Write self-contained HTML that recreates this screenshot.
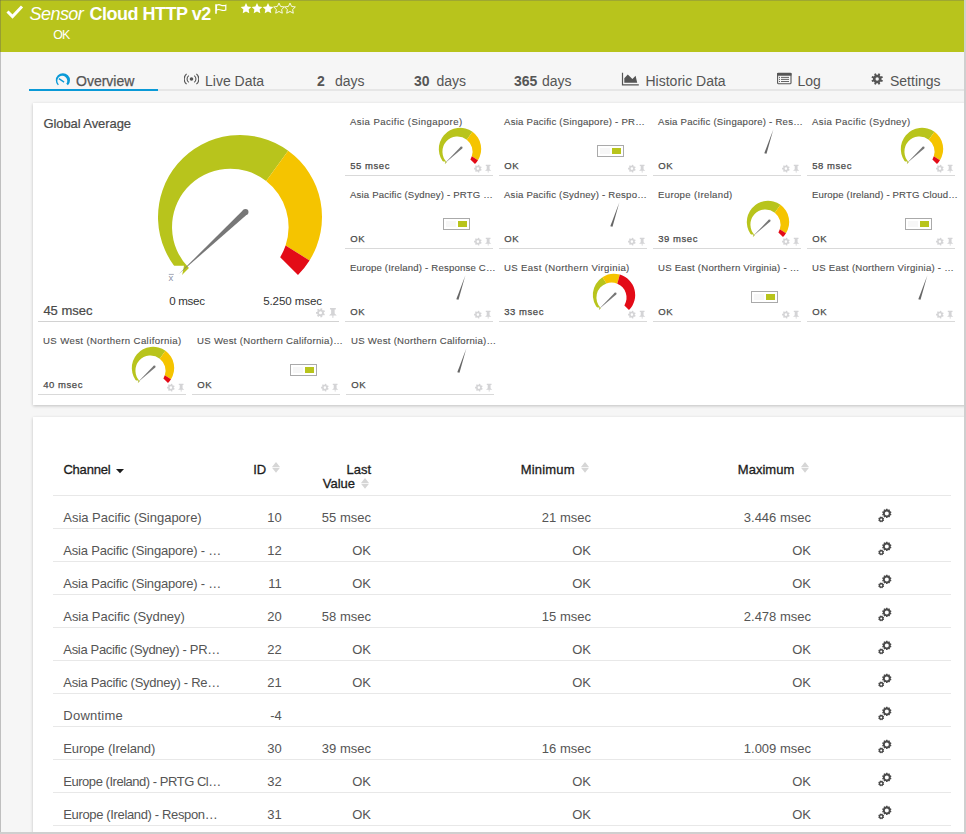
<!DOCTYPE html><html><head><meta charset="utf-8"><style>
html,body{margin:0;padding:0}
body{width:966px;height:834px;overflow:hidden;position:relative;background:#f6f6f6;font-family:"Liberation Sans", sans-serif;}
.t{position:absolute;white-space:nowrap;line-height:1;}
.ic{position:absolute;line-height:0}
.abs{position:absolute}
</style></head><body>

<div class="abs" style="left:0;top:0;width:966px;height:52px;background:#b8c41c"></div>
<svg class="abs" style="left:6px;top:4.3px" width="18" height="15" viewBox="0 0 18 15"><path d="M1.5 7.5 L6.5 12.5 L16 2.5" fill="none" stroke="#fff" stroke-width="3"/></svg>
<div class="t " style="left:29.50px;top:4.96px;font-size:18px;color:#fff;font-style:italic;letter-spacing:-0.55px">Sensor</div>
<div class="t " style="left:89.50px;top:5.36px;font-size:18px;color:#fff;font-weight:bold;letter-spacing:-0.5px">Cloud HTTP v2</div>
<svg class="abs" style="left:215px;top:4px" width="12" height="10" viewBox="0 0 12 10"><path d="M1 0.3V9.7" stroke="#fff" stroke-width="1.6"/><path d="M1.5 1.2 Q4 0.2 6 1.2 T10.8 1.2 V6 Q8.5 7 6 6 T1.5 6 Z" fill="none" stroke="#fff" stroke-width="1.2"/></svg>
<svg class="abs" style="left:0;top:0" width="320" height="20"><polygon points="246.00,3.10 247.62,6.48 251.33,6.97 248.62,9.55 249.29,13.23 246.00,11.45 242.71,13.23 243.38,9.55 240.67,6.97 244.38,6.48" fill="#fff"/><polygon points="257.00,3.10 258.62,6.48 262.33,6.97 259.62,9.55 260.29,13.23 257.00,11.45 253.71,13.23 254.38,9.55 251.67,6.97 255.38,6.48" fill="#fff"/><polygon points="268.00,3.10 269.62,6.48 273.33,6.97 270.62,9.55 271.29,13.23 268.00,11.45 264.71,13.23 265.38,9.55 262.67,6.97 266.38,6.48" fill="#fff"/><polygon points="279.00,3.10 280.62,6.48 284.33,6.97 281.62,9.55 282.29,13.23 279.00,11.45 275.71,13.23 276.38,9.55 273.67,6.97 277.38,6.48" fill="none" stroke="#fff" stroke-width="0.9"/><polygon points="290.00,3.10 291.62,6.48 295.33,6.97 292.62,9.55 293.29,13.23 290.00,11.45 286.71,13.23 287.38,9.55 284.67,6.97 288.38,6.48" fill="none" stroke="#fff" stroke-width="0.9"/></svg>
<div class="t " style="left:53.20px;top:28.60px;font-size:12.4px;color:#fff;letter-spacing:-0.75px">OK</div>
<div class="abs" style="left:29px;top:89px;width:937px;height:2px;background:#e6e6e6"></div>
<div class="abs" style="left:29px;top:89px;width:129px;height:2px;background:#0a9ad7"></div>
<svg class="abs" style="left:0;top:60px" width="80" height="30" viewBox="0 60 80 30"><path d="M57.88,85.32 A7.1,7.1 0 1 1 67.92,85.32 L66.34,83.74 A5.00,5.00 0 1 0 58.82,84.38 Z" fill="#0a9ad7"/><path d="M58.9 78.6 L64.1 82.1" stroke="#0a9ad7" stroke-width="1.3"/></svg>
<div class="t " style="left:76.00px;top:73.75px;font-size:14px;color:#555;-webkit-text-stroke:0.25px #555">Overview</div>
<svg class="abs" style="left:184px;top:73px" width="15" height="12" viewBox="0 0 15 12"><circle cx="7.5" cy="6" r="1.8" fill="#555"/><path d="M4.8 2.6 A4.2 4.2 0 0 0 4.8 9.4 M10.2 2.6 A4.2 4.2 0 0 1 10.2 9.4 M2.6 0.8 A6.8 6.8 0 0 0 2.6 11.2 M12.4 0.8 A6.8 6.8 0 0 1 12.4 11.2" fill="none" stroke="#555" stroke-width="1.1"/></svg>
<div class="t " style="left:205.00px;top:73.75px;font-size:14px;color:#555">Live Data</div>
<div class="t " style="left:317.00px;top:73.75px;font-size:14px;color:#555;font-weight:bold">2</div>
<div class="t " style="left:335.00px;top:73.75px;font-size:14px;color:#555">days</div>
<div class="t " style="left:414.00px;top:73.75px;font-size:14px;color:#555;font-weight:bold">30</div>
<div class="t " style="left:436.50px;top:73.75px;font-size:14px;color:#555">days</div>
<div class="t " style="left:514.00px;top:73.75px;font-size:14px;color:#555;font-weight:bold">365</div>
<div class="t " style="left:542.00px;top:73.75px;font-size:14px;color:#555">days</div>
<svg class="abs" style="left:615px;top:65px" width="30" height="25" viewBox="0 0 30 25"><path d="M7.5 7.8 V19.9 H23.8" fill="none" stroke="#555" stroke-width="1.2"/><path d="M9.3 17.8 V13.3 L12.8 9.6 L17.4 14 L20.6 10.8 L22.2 17.8 Z" fill="#555"/></svg>
<div class="t " style="left:645.50px;top:73.75px;font-size:14px;color:#555">Historic Data</div>
<svg class="abs" style="left:770px;top:65px" width="30" height="25" viewBox="0 0 30 25"><rect x="7.6" y="8.4" width="13.4" height="10.3" rx="0.6" fill="none" stroke="#555" stroke-width="1.1"/><rect x="7.1" y="7.9" width="14.4" height="2.8" rx="0.6" fill="#555"/><path d="M9 12.4H10 M11 12.4H19 M9 14.4H10 M11 14.4H19 M9 16.5H10 M11 16.5H19" stroke="#555" stroke-width="0.9"/></svg>
<div class="t " style="left:797.50px;top:73.75px;font-size:14px;color:#555">Log</div>
<svg class="abs" style="left:860px;top:65px" width="30" height="25" viewBox="0 0 30 25"><path fill-rule="evenodd" fill="#555" d="M21.50,14.00 L21.44,14.71 L22.95,15.33 L22.21,17.12 L20.70,16.50 L20.24,17.04 L19.70,17.50 L20.32,19.01 L18.53,19.75 L17.91,18.24 L17.20,18.30 L16.49,18.24 L15.87,19.75 L14.08,19.01 L14.70,17.50 L14.16,17.04 L13.70,16.50 L12.19,17.12 L11.45,15.33 L12.96,14.71 L12.90,14.00 L12.96,13.29 L11.45,12.67 L12.19,10.88 L13.70,11.50 L14.16,10.96 L14.70,10.50 L14.08,8.99 L15.87,8.25 L16.49,9.76 L17.20,9.70 L17.91,9.76 L18.53,8.25 L20.32,8.99 L19.70,10.50 L20.24,10.96 L20.70,11.50 L22.21,10.88 L22.95,12.67 L21.44,13.29 Z M18.90,14.00 A1.7,1.7 0 1 0 15.50,14.00 A1.7,1.7 0 1 0 18.90,14.00 Z"/></svg>
<div class="t " style="left:890.00px;top:73.75px;font-size:14px;color:#555">Settings</div>
<div class="abs" style="left:33px;top:103px;width:940px;height:302px;background:#fff;box-shadow:0 1px 3px rgba(0,0,0,0.22)"></div>
<div class="t " style="left:43.40px;top:116.60px;font-size:13px;color:#4a4a4a;letter-spacing:-0.08px;-webkit-text-stroke:0.2px #4a4a4a">Global Average</div>
<svg class="abs" style="left:0;top:0" width="340" height="330"><path d="M182.02,274.98 A82,82 0 0 1 288.20,150.66 L266.14,181.02 A58.30,58.30 0 0 0 188.93,268.07 Z" fill="#b8c41c"/><path d="M288.20,150.66 A82,82 0 0 1 309.54,260.45 L285.59,245.49 A58.30,58.30 0 0 0 266.14,181.02 Z" fill="#f5c400"/><path d="M309.54,260.45 A82,82 0 0 1 297.98,274.98 L280.18,257.18 A58.30,58.30 0 0 0 285.59,245.49 Z" fill="#e30b17"/><polygon points="165.00,265.70 184.00,265.70 182.10,275.40 165.00,287.00" fill="#fff"/><path d="M243.44,209.69 L178.57,274.29 L247.53,214.08 Z" fill="#777"/><circle cx="245.49" cy="211.89" r="3.00" fill="#777"/><text x="168.6" y="281.2" font-family="Liberation Sans" font-size="9.5" fill="#8f95a8">x</text><path d="M168.8 274.4H173.8" stroke="#8f95a8" stroke-width="0.8"/></svg>
<div class="t " style="left:169.20px;top:295.48px;font-size:11.6px;color:#333;letter-spacing:-0.3px">0 msec</div>
<div class="t " style="left:263.20px;top:295.48px;font-size:11.6px;color:#333;letter-spacing:-0.12px">5.250 msec</div>
<div class="t " style="left:43.40px;top:303.80px;font-size:13px;color:#4a4a4a;-webkit-text-stroke:0.22px #4a4a4a">45 msec</div>
<svg class="abs" style="left:300px;top:300px" width="45" height="25" viewBox="300 300 45 25"><path fill-rule="evenodd" fill="#d4d4d6" d="M323.90,312.80 L323.85,313.39 L324.96,313.92 L324.16,315.59 L323.05,315.05 L322.62,315.46 L322.13,315.79 L322.40,316.99 L320.60,317.40 L320.33,316.20 L319.74,316.12 L319.18,315.94 L318.41,316.90 L316.97,315.75 L317.74,314.79 L317.43,314.28 L317.22,313.72 L315.99,313.72 L315.99,311.88 L317.22,311.88 L317.43,311.32 L317.74,310.81 L316.97,309.85 L318.41,308.70 L319.18,309.66 L319.74,309.48 L320.33,309.40 L320.60,308.20 L322.40,308.61 L322.13,309.81 L322.62,310.14 L323.05,310.55 L324.16,310.01 L324.96,311.68 L323.85,312.21 Z M322.02,312.80 A1.518,1.518 0 1 0 318.98,312.80 A1.518,1.518 0 1 0 322.02,312.80 Z"/><path fill="#d4d4d6" d="M329.98,308.00 L335.82,308.00 L335.82,309.60 L334.65,309.60 L334.65,313.60 L336.80,315.40 L333.49,315.40 L333.29,318.00 L332.51,318.00 L332.31,315.40 L329.00,315.40 L331.14,313.60 L331.14,309.60 L329.98,309.60 Z"/></svg>
<div class="abs" style="left:38px;top:321px;width:301px;height:1px;background:#d2d2d2"></div>
<div class="t" style="left:350px;top:117.37px;font-size:9.6px;color:#4f4f4f;letter-spacing:0.426px;-webkit-text-stroke:0.12px #4f4f4f">Asia Pacific (Singapore)</div>
<div class="t " style="left:350.20px;top:160.86px;font-size:9.5px;color:#4a4a4a;letter-spacing:0.55px;-webkit-text-stroke:0.25px #4a4a4a">55 msec</div>
<svg class="abs" style="left:469px;top:160px" width="25" height="20" viewBox="469 160 25 20"><path fill-rule="evenodd" fill="#d4d4d6" d="M480.79,168.60 L480.74,169.10 L481.68,169.55 L481.00,170.96 L480.06,170.51 L479.70,170.86 L479.28,171.14 L479.51,172.15 L477.99,172.50 L477.76,171.48 L477.26,171.41 L476.78,171.26 L476.13,172.07 L474.91,171.10 L475.56,170.29 L475.30,169.85 L475.12,169.38 L474.08,169.38 L474.08,167.82 L475.12,167.82 L475.30,167.35 L475.56,166.91 L474.91,166.10 L476.13,165.13 L476.78,165.94 L477.26,165.79 L477.76,165.72 L477.99,164.70 L479.51,165.05 L479.28,166.06 L479.70,166.34 L480.06,166.69 L481.00,166.24 L481.68,167.65 L480.74,168.10 Z M479.19,168.60 A1.287,1.287 0 1 0 476.61,168.60 A1.287,1.287 0 1 0 479.19,168.60 Z"/><path fill="#d4d4d6" d="M485.79,164.80 L490.51,164.80 L490.51,166.08 L489.57,166.08 L489.57,169.28 L491.30,170.72 L488.62,170.72 L488.46,172.80 L487.83,172.80 L487.68,170.72 L485.00,170.72 L486.73,169.28 L486.73,166.08 L485.79,166.08 Z"/></svg>
<div class="abs" style="left:345px;top:175px;width:148px;height:1px;background:#d9d9d9"></div>
<div class="t" style="left:504px;top:117.37px;font-size:9.6px;color:#4f4f4f;letter-spacing:0.240px;-webkit-text-stroke:0.12px #4f4f4f">Asia Pacific (Singapore) - PR…</div>
<div class="t " style="left:504.20px;top:160.86px;font-size:9.5px;color:#4a4a4a;letter-spacing:0.55px;-webkit-text-stroke:0.25px #4a4a4a">OK</div>
<svg class="abs" style="left:623px;top:160px" width="25" height="20" viewBox="623 160 25 20"><path fill-rule="evenodd" fill="#d4d4d6" d="M634.79,168.60 L634.74,169.10 L635.68,169.55 L635.00,170.96 L634.06,170.51 L633.70,170.86 L633.28,171.14 L633.51,172.15 L631.99,172.50 L631.76,171.48 L631.26,171.41 L630.78,171.26 L630.13,172.07 L628.91,171.10 L629.56,170.29 L629.30,169.85 L629.12,169.38 L628.08,169.38 L628.08,167.82 L629.12,167.82 L629.30,167.35 L629.56,166.91 L628.91,166.10 L630.13,165.13 L630.78,165.94 L631.26,165.79 L631.76,165.72 L631.99,164.70 L633.51,165.05 L633.28,166.06 L633.70,166.34 L634.06,166.69 L635.00,166.24 L635.68,167.65 L634.74,168.10 Z M633.19,168.60 A1.287,1.287 0 1 0 630.61,168.60 A1.287,1.287 0 1 0 633.19,168.60 Z"/><path fill="#d4d4d6" d="M639.79,164.80 L644.51,164.80 L644.51,166.08 L643.57,166.08 L643.57,169.28 L645.30,170.72 L642.62,170.72 L642.47,172.80 L641.84,172.80 L641.68,170.72 L639.00,170.72 L640.73,169.28 L640.73,166.08 L639.79,166.08 Z"/></svg>
<div class="abs" style="left:499px;top:175px;width:148px;height:1px;background:#d9d9d9"></div>
<div class="t" style="left:658px;top:117.37px;font-size:9.6px;color:#4f4f4f;letter-spacing:0.241px;-webkit-text-stroke:0.12px #4f4f4f">Asia Pacific (Singapore) - Res…</div>
<div class="t " style="left:658.20px;top:160.86px;font-size:9.5px;color:#4a4a4a;letter-spacing:0.55px;-webkit-text-stroke:0.25px #4a4a4a">OK</div>
<svg class="abs" style="left:777px;top:160px" width="25" height="20" viewBox="777 160 25 20"><path fill-rule="evenodd" fill="#d4d4d6" d="M788.79,168.60 L788.74,169.10 L789.68,169.55 L789.00,170.96 L788.06,170.51 L787.70,170.86 L787.28,171.14 L787.51,172.15 L785.99,172.50 L785.76,171.48 L785.26,171.41 L784.78,171.26 L784.13,172.07 L782.91,171.10 L783.56,170.29 L783.30,169.85 L783.12,169.38 L782.08,169.38 L782.08,167.82 L783.12,167.82 L783.30,167.35 L783.56,166.91 L782.91,166.10 L784.13,165.13 L784.78,165.94 L785.26,165.79 L785.76,165.72 L785.99,164.70 L787.51,165.05 L787.28,166.06 L787.70,166.34 L788.06,166.69 L789.00,166.24 L789.68,167.65 L788.74,168.10 Z M787.19,168.60 A1.287,1.287 0 1 0 784.61,168.60 A1.287,1.287 0 1 0 787.19,168.60 Z"/><path fill="#d4d4d6" d="M793.79,164.80 L798.51,164.80 L798.51,166.08 L797.57,166.08 L797.57,169.28 L799.30,170.72 L796.62,170.72 L796.47,172.80 L795.84,172.80 L795.68,170.72 L793.00,170.72 L794.73,169.28 L794.73,166.08 L793.79,166.08 Z"/></svg>
<div class="abs" style="left:653px;top:175px;width:148px;height:1px;background:#d9d9d9"></div>
<div class="t" style="left:812px;top:117.37px;font-size:9.6px;color:#4f4f4f;letter-spacing:0.378px;-webkit-text-stroke:0.12px #4f4f4f">Asia Pacific (Sydney)</div>
<div class="t " style="left:812.20px;top:160.86px;font-size:9.5px;color:#4a4a4a;letter-spacing:0.55px;-webkit-text-stroke:0.25px #4a4a4a">58 msec</div>
<svg class="abs" style="left:931px;top:160px" width="25" height="20" viewBox="931 160 25 20"><path fill-rule="evenodd" fill="#d4d4d6" d="M942.79,168.60 L942.74,169.10 L943.68,169.55 L943.00,170.96 L942.06,170.51 L941.70,170.86 L941.28,171.14 L941.51,172.15 L939.99,172.50 L939.76,171.48 L939.26,171.41 L938.78,171.26 L938.13,172.07 L936.91,171.10 L937.56,170.29 L937.30,169.85 L937.12,169.38 L936.08,169.38 L936.08,167.82 L937.12,167.82 L937.30,167.35 L937.56,166.91 L936.91,166.10 L938.13,165.13 L938.78,165.94 L939.26,165.79 L939.76,165.72 L939.99,164.70 L941.51,165.05 L941.28,166.06 L941.70,166.34 L942.06,166.69 L943.00,166.24 L943.68,167.65 L942.74,168.10 Z M941.19,168.60 A1.287,1.287 0 1 0 938.61,168.60 A1.287,1.287 0 1 0 941.19,168.60 Z"/><path fill="#d4d4d6" d="M947.79,164.80 L952.51,164.80 L952.51,166.08 L951.57,166.08 L951.57,169.28 L953.30,170.72 L950.62,170.72 L950.47,172.80 L949.84,172.80 L949.68,170.72 L947.00,170.72 L948.73,169.28 L948.73,166.08 L947.79,166.08 Z"/></svg>
<div class="abs" style="left:807px;top:175px;width:148px;height:1px;background:#d9d9d9"></div>
<div class="t" style="left:350px;top:190.37px;font-size:9.6px;color:#4f4f4f;letter-spacing:0.169px;-webkit-text-stroke:0.12px #4f4f4f">Asia Pacific (Sydney) - PRTG …</div>
<div class="t " style="left:350.20px;top:233.86px;font-size:9.5px;color:#4a4a4a;letter-spacing:0.55px;-webkit-text-stroke:0.25px #4a4a4a">OK</div>
<svg class="abs" style="left:469px;top:233px" width="25" height="20" viewBox="469 233 25 20"><path fill-rule="evenodd" fill="#d4d4d6" d="M480.79,241.60 L480.74,242.10 L481.68,242.55 L481.00,243.96 L480.06,243.51 L479.70,243.86 L479.28,244.14 L479.51,245.15 L477.99,245.50 L477.76,244.48 L477.26,244.41 L476.78,244.26 L476.13,245.07 L474.91,244.10 L475.56,243.29 L475.30,242.85 L475.12,242.38 L474.08,242.38 L474.08,240.82 L475.12,240.82 L475.30,240.35 L475.56,239.91 L474.91,239.10 L476.13,238.13 L476.78,238.94 L477.26,238.79 L477.76,238.72 L477.99,237.70 L479.51,238.05 L479.28,239.06 L479.70,239.34 L480.06,239.69 L481.00,239.24 L481.68,240.65 L480.74,241.10 Z M479.19,241.60 A1.287,1.287 0 1 0 476.61,241.60 A1.287,1.287 0 1 0 479.19,241.60 Z"/><path fill="#d4d4d6" d="M485.79,237.80 L490.51,237.80 L490.51,239.08 L489.57,239.08 L489.57,242.28 L491.30,243.72 L488.62,243.72 L488.46,245.80 L487.83,245.80 L487.68,243.72 L485.00,243.72 L486.73,242.28 L486.73,239.08 L485.79,239.08 Z"/></svg>
<div class="abs" style="left:345px;top:248px;width:148px;height:1px;background:#d9d9d9"></div>
<div class="t" style="left:504px;top:190.37px;font-size:9.6px;color:#4f4f4f;letter-spacing:0.217px;-webkit-text-stroke:0.12px #4f4f4f">Asia Pacific (Sydney) - Respo…</div>
<div class="t " style="left:504.20px;top:233.86px;font-size:9.5px;color:#4a4a4a;letter-spacing:0.55px;-webkit-text-stroke:0.25px #4a4a4a">OK</div>
<svg class="abs" style="left:623px;top:233px" width="25" height="20" viewBox="623 233 25 20"><path fill-rule="evenodd" fill="#d4d4d6" d="M634.79,241.60 L634.74,242.10 L635.68,242.55 L635.00,243.96 L634.06,243.51 L633.70,243.86 L633.28,244.14 L633.51,245.15 L631.99,245.50 L631.76,244.48 L631.26,244.41 L630.78,244.26 L630.13,245.07 L628.91,244.10 L629.56,243.29 L629.30,242.85 L629.12,242.38 L628.08,242.38 L628.08,240.82 L629.12,240.82 L629.30,240.35 L629.56,239.91 L628.91,239.10 L630.13,238.13 L630.78,238.94 L631.26,238.79 L631.76,238.72 L631.99,237.70 L633.51,238.05 L633.28,239.06 L633.70,239.34 L634.06,239.69 L635.00,239.24 L635.68,240.65 L634.74,241.10 Z M633.19,241.60 A1.287,1.287 0 1 0 630.61,241.60 A1.287,1.287 0 1 0 633.19,241.60 Z"/><path fill="#d4d4d6" d="M639.79,237.80 L644.51,237.80 L644.51,239.08 L643.57,239.08 L643.57,242.28 L645.30,243.72 L642.62,243.72 L642.47,245.80 L641.84,245.80 L641.68,243.72 L639.00,243.72 L640.73,242.28 L640.73,239.08 L639.79,239.08 Z"/></svg>
<div class="abs" style="left:499px;top:248px;width:148px;height:1px;background:#d9d9d9"></div>
<div class="t" style="left:658px;top:190.37px;font-size:9.6px;color:#4f4f4f;letter-spacing:0.331px;-webkit-text-stroke:0.12px #4f4f4f">Europe (Ireland)</div>
<div class="t " style="left:658.20px;top:233.86px;font-size:9.5px;color:#4a4a4a;letter-spacing:0.55px;-webkit-text-stroke:0.25px #4a4a4a">39 msec</div>
<svg class="abs" style="left:777px;top:233px" width="25" height="20" viewBox="777 233 25 20"><path fill-rule="evenodd" fill="#d4d4d6" d="M788.79,241.60 L788.74,242.10 L789.68,242.55 L789.00,243.96 L788.06,243.51 L787.70,243.86 L787.28,244.14 L787.51,245.15 L785.99,245.50 L785.76,244.48 L785.26,244.41 L784.78,244.26 L784.13,245.07 L782.91,244.10 L783.56,243.29 L783.30,242.85 L783.12,242.38 L782.08,242.38 L782.08,240.82 L783.12,240.82 L783.30,240.35 L783.56,239.91 L782.91,239.10 L784.13,238.13 L784.78,238.94 L785.26,238.79 L785.76,238.72 L785.99,237.70 L787.51,238.05 L787.28,239.06 L787.70,239.34 L788.06,239.69 L789.00,239.24 L789.68,240.65 L788.74,241.10 Z M787.19,241.60 A1.287,1.287 0 1 0 784.61,241.60 A1.287,1.287 0 1 0 787.19,241.60 Z"/><path fill="#d4d4d6" d="M793.79,237.80 L798.51,237.80 L798.51,239.08 L797.57,239.08 L797.57,242.28 L799.30,243.72 L796.62,243.72 L796.47,245.80 L795.84,245.80 L795.68,243.72 L793.00,243.72 L794.73,242.28 L794.73,239.08 L793.79,239.08 Z"/></svg>
<div class="abs" style="left:653px;top:248px;width:148px;height:1px;background:#d9d9d9"></div>
<div class="t" style="left:812px;top:190.37px;font-size:9.6px;color:#4f4f4f;letter-spacing:0.143px;-webkit-text-stroke:0.12px #4f4f4f">Europe (Ireland) - PRTG Cloud…</div>
<div class="t " style="left:812.20px;top:233.86px;font-size:9.5px;color:#4a4a4a;letter-spacing:0.55px;-webkit-text-stroke:0.25px #4a4a4a">OK</div>
<svg class="abs" style="left:931px;top:233px" width="25" height="20" viewBox="931 233 25 20"><path fill-rule="evenodd" fill="#d4d4d6" d="M942.79,241.60 L942.74,242.10 L943.68,242.55 L943.00,243.96 L942.06,243.51 L941.70,243.86 L941.28,244.14 L941.51,245.15 L939.99,245.50 L939.76,244.48 L939.26,244.41 L938.78,244.26 L938.13,245.07 L936.91,244.10 L937.56,243.29 L937.30,242.85 L937.12,242.38 L936.08,242.38 L936.08,240.82 L937.12,240.82 L937.30,240.35 L937.56,239.91 L936.91,239.10 L938.13,238.13 L938.78,238.94 L939.26,238.79 L939.76,238.72 L939.99,237.70 L941.51,238.05 L941.28,239.06 L941.70,239.34 L942.06,239.69 L943.00,239.24 L943.68,240.65 L942.74,241.10 Z M941.19,241.60 A1.287,1.287 0 1 0 938.61,241.60 A1.287,1.287 0 1 0 941.19,241.60 Z"/><path fill="#d4d4d6" d="M947.79,237.80 L952.51,237.80 L952.51,239.08 L951.57,239.08 L951.57,242.28 L953.30,243.72 L950.62,243.72 L950.47,245.80 L949.84,245.80 L949.68,243.72 L947.00,243.72 L948.73,242.28 L948.73,239.08 L947.79,239.08 Z"/></svg>
<div class="abs" style="left:807px;top:248px;width:148px;height:1px;background:#d9d9d9"></div>
<div class="t" style="left:350px;top:263.37px;font-size:9.6px;color:#4f4f4f;letter-spacing:0.181px;-webkit-text-stroke:0.12px #4f4f4f">Europe (Ireland) - Response C…</div>
<div class="t " style="left:350.20px;top:306.86px;font-size:9.5px;color:#4a4a4a;letter-spacing:0.55px;-webkit-text-stroke:0.25px #4a4a4a">OK</div>
<svg class="abs" style="left:469px;top:306px" width="25" height="20" viewBox="469 306 25 20"><path fill-rule="evenodd" fill="#d4d4d6" d="M480.79,314.60 L480.74,315.10 L481.68,315.55 L481.00,316.96 L480.06,316.51 L479.70,316.86 L479.28,317.14 L479.51,318.15 L477.99,318.50 L477.76,317.48 L477.26,317.41 L476.78,317.26 L476.13,318.07 L474.91,317.10 L475.56,316.29 L475.30,315.85 L475.12,315.38 L474.08,315.38 L474.08,313.82 L475.12,313.82 L475.30,313.35 L475.56,312.91 L474.91,312.10 L476.13,311.13 L476.78,311.94 L477.26,311.79 L477.76,311.72 L477.99,310.70 L479.51,311.05 L479.28,312.06 L479.70,312.34 L480.06,312.69 L481.00,312.24 L481.68,313.65 L480.74,314.10 Z M479.19,314.60 A1.287,1.287 0 1 0 476.61,314.60 A1.287,1.287 0 1 0 479.19,314.60 Z"/><path fill="#d4d4d6" d="M485.79,310.80 L490.51,310.80 L490.51,312.08 L489.57,312.08 L489.57,315.28 L491.30,316.72 L488.62,316.72 L488.46,318.80 L487.83,318.80 L487.68,316.72 L485.00,316.72 L486.73,315.28 L486.73,312.08 L485.79,312.08 Z"/></svg>
<div class="abs" style="left:345px;top:321px;width:148px;height:1px;background:#d9d9d9"></div>
<div class="t" style="left:504px;top:263.37px;font-size:9.6px;color:#4f4f4f;letter-spacing:0.355px;-webkit-text-stroke:0.12px #4f4f4f">US East (Northern Virginia)</div>
<div class="t " style="left:504.20px;top:306.86px;font-size:9.5px;color:#4a4a4a;letter-spacing:0.55px;-webkit-text-stroke:0.25px #4a4a4a">33 msec</div>
<svg class="abs" style="left:623px;top:306px" width="25" height="20" viewBox="623 306 25 20"><path fill-rule="evenodd" fill="#d4d4d6" d="M634.79,314.60 L634.74,315.10 L635.68,315.55 L635.00,316.96 L634.06,316.51 L633.70,316.86 L633.28,317.14 L633.51,318.15 L631.99,318.50 L631.76,317.48 L631.26,317.41 L630.78,317.26 L630.13,318.07 L628.91,317.10 L629.56,316.29 L629.30,315.85 L629.12,315.38 L628.08,315.38 L628.08,313.82 L629.12,313.82 L629.30,313.35 L629.56,312.91 L628.91,312.10 L630.13,311.13 L630.78,311.94 L631.26,311.79 L631.76,311.72 L631.99,310.70 L633.51,311.05 L633.28,312.06 L633.70,312.34 L634.06,312.69 L635.00,312.24 L635.68,313.65 L634.74,314.10 Z M633.19,314.60 A1.287,1.287 0 1 0 630.61,314.60 A1.287,1.287 0 1 0 633.19,314.60 Z"/><path fill="#d4d4d6" d="M639.79,310.80 L644.51,310.80 L644.51,312.08 L643.57,312.08 L643.57,315.28 L645.30,316.72 L642.62,316.72 L642.47,318.80 L641.84,318.80 L641.68,316.72 L639.00,316.72 L640.73,315.28 L640.73,312.08 L639.79,312.08 Z"/></svg>
<div class="abs" style="left:499px;top:321px;width:148px;height:1px;background:#d9d9d9"></div>
<div class="t" style="left:658px;top:263.37px;font-size:9.6px;color:#4f4f4f;letter-spacing:0.240px;-webkit-text-stroke:0.12px #4f4f4f">US East (Northern Virginia) - …</div>
<div class="t " style="left:658.20px;top:306.86px;font-size:9.5px;color:#4a4a4a;letter-spacing:0.55px;-webkit-text-stroke:0.25px #4a4a4a">OK</div>
<svg class="abs" style="left:777px;top:306px" width="25" height="20" viewBox="777 306 25 20"><path fill-rule="evenodd" fill="#d4d4d6" d="M788.79,314.60 L788.74,315.10 L789.68,315.55 L789.00,316.96 L788.06,316.51 L787.70,316.86 L787.28,317.14 L787.51,318.15 L785.99,318.50 L785.76,317.48 L785.26,317.41 L784.78,317.26 L784.13,318.07 L782.91,317.10 L783.56,316.29 L783.30,315.85 L783.12,315.38 L782.08,315.38 L782.08,313.82 L783.12,313.82 L783.30,313.35 L783.56,312.91 L782.91,312.10 L784.13,311.13 L784.78,311.94 L785.26,311.79 L785.76,311.72 L785.99,310.70 L787.51,311.05 L787.28,312.06 L787.70,312.34 L788.06,312.69 L789.00,312.24 L789.68,313.65 L788.74,314.10 Z M787.19,314.60 A1.287,1.287 0 1 0 784.61,314.60 A1.287,1.287 0 1 0 787.19,314.60 Z"/><path fill="#d4d4d6" d="M793.79,310.80 L798.51,310.80 L798.51,312.08 L797.57,312.08 L797.57,315.28 L799.30,316.72 L796.62,316.72 L796.47,318.80 L795.84,318.80 L795.68,316.72 L793.00,316.72 L794.73,315.28 L794.73,312.08 L793.79,312.08 Z"/></svg>
<div class="abs" style="left:653px;top:321px;width:148px;height:1px;background:#d9d9d9"></div>
<div class="t" style="left:812px;top:263.37px;font-size:9.6px;color:#4f4f4f;letter-spacing:0.254px;-webkit-text-stroke:0.12px #4f4f4f">US East (Northern Virginia) - …</div>
<div class="t " style="left:812.20px;top:306.86px;font-size:9.5px;color:#4a4a4a;letter-spacing:0.55px;-webkit-text-stroke:0.25px #4a4a4a">OK</div>
<svg class="abs" style="left:931px;top:306px" width="25" height="20" viewBox="931 306 25 20"><path fill-rule="evenodd" fill="#d4d4d6" d="M942.79,314.60 L942.74,315.10 L943.68,315.55 L943.00,316.96 L942.06,316.51 L941.70,316.86 L941.28,317.14 L941.51,318.15 L939.99,318.50 L939.76,317.48 L939.26,317.41 L938.78,317.26 L938.13,318.07 L936.91,317.10 L937.56,316.29 L937.30,315.85 L937.12,315.38 L936.08,315.38 L936.08,313.82 L937.12,313.82 L937.30,313.35 L937.56,312.91 L936.91,312.10 L938.13,311.13 L938.78,311.94 L939.26,311.79 L939.76,311.72 L939.99,310.70 L941.51,311.05 L941.28,312.06 L941.70,312.34 L942.06,312.69 L943.00,312.24 L943.68,313.65 L942.74,314.10 Z M941.19,314.60 A1.287,1.287 0 1 0 938.61,314.60 A1.287,1.287 0 1 0 941.19,314.60 Z"/><path fill="#d4d4d6" d="M947.79,310.80 L952.51,310.80 L952.51,312.08 L951.57,312.08 L951.57,315.28 L953.30,316.72 L950.62,316.72 L950.47,318.80 L949.84,318.80 L949.68,316.72 L947.00,316.72 L948.73,315.28 L948.73,312.08 L947.79,312.08 Z"/></svg>
<div class="abs" style="left:807px;top:321px;width:148px;height:1px;background:#d9d9d9"></div>
<div class="t" style="left:43px;top:336.37px;font-size:9.6px;color:#4f4f4f;letter-spacing:0.391px;-webkit-text-stroke:0.12px #4f4f4f">US West (Northern California)</div>
<div class="t " style="left:43.20px;top:379.86px;font-size:9.5px;color:#4a4a4a;letter-spacing:0.55px;-webkit-text-stroke:0.25px #4a4a4a">40 msec</div>
<svg class="abs" style="left:162px;top:379px" width="25" height="20" viewBox="162 379 25 20"><path fill-rule="evenodd" fill="#d4d4d6" d="M173.79,387.60 L173.74,388.10 L174.68,388.55 L174.00,389.96 L173.06,389.51 L172.70,389.86 L172.28,390.14 L172.51,391.15 L170.99,391.50 L170.76,390.48 L170.26,390.41 L169.78,390.26 L169.13,391.07 L167.91,390.10 L168.56,389.29 L168.30,388.85 L168.12,388.38 L167.08,388.38 L167.08,386.82 L168.12,386.82 L168.30,386.35 L168.56,385.91 L167.91,385.10 L169.13,384.13 L169.78,384.94 L170.26,384.79 L170.76,384.72 L170.99,383.70 L172.51,384.05 L172.28,385.06 L172.70,385.34 L173.06,385.69 L174.00,385.24 L174.68,386.65 L173.74,387.10 Z M172.19,387.60 A1.287,1.287 0 1 0 169.61,387.60 A1.287,1.287 0 1 0 172.19,387.60 Z"/><path fill="#d4d4d6" d="M178.79,383.80 L183.51,383.80 L183.51,385.08 L182.57,385.08 L182.57,388.28 L184.30,389.72 L181.62,389.72 L181.47,391.80 L180.84,391.80 L180.68,389.72 L178.00,389.72 L179.73,388.28 L179.73,385.08 L178.79,385.08 Z"/></svg>
<div class="abs" style="left:38px;top:394px;width:148px;height:1px;background:#d9d9d9"></div>
<div class="t" style="left:197px;top:336.37px;font-size:9.6px;color:#4f4f4f;letter-spacing:0.309px;-webkit-text-stroke:0.12px #4f4f4f">US West (Northern California)…</div>
<div class="t " style="left:197.20px;top:379.86px;font-size:9.5px;color:#4a4a4a;letter-spacing:0.55px;-webkit-text-stroke:0.25px #4a4a4a">OK</div>
<svg class="abs" style="left:316px;top:379px" width="25" height="20" viewBox="316 379 25 20"><path fill-rule="evenodd" fill="#d4d4d6" d="M327.79,387.60 L327.74,388.10 L328.68,388.55 L328.00,389.96 L327.06,389.51 L326.70,389.86 L326.28,390.14 L326.51,391.15 L324.99,391.50 L324.76,390.48 L324.26,390.41 L323.78,390.26 L323.13,391.07 L321.91,390.10 L322.56,389.29 L322.30,388.85 L322.12,388.38 L321.08,388.38 L321.08,386.82 L322.12,386.82 L322.30,386.35 L322.56,385.91 L321.91,385.10 L323.13,384.13 L323.78,384.94 L324.26,384.79 L324.76,384.72 L324.99,383.70 L326.51,384.05 L326.28,385.06 L326.70,385.34 L327.06,385.69 L328.00,385.24 L328.68,386.65 L327.74,387.10 Z M326.19,387.60 A1.287,1.287 0 1 0 323.61,387.60 A1.287,1.287 0 1 0 326.19,387.60 Z"/><path fill="#d4d4d6" d="M332.79,383.80 L337.51,383.80 L337.51,385.08 L336.57,385.08 L336.57,388.28 L338.30,389.72 L335.62,389.72 L335.46,391.80 L334.83,391.80 L334.68,389.72 L332.00,389.72 L333.73,388.28 L333.73,385.08 L332.79,385.08 Z"/></svg>
<div class="abs" style="left:192px;top:394px;width:148px;height:1px;background:#d9d9d9"></div>
<div class="t" style="left:351px;top:336.37px;font-size:9.6px;color:#4f4f4f;letter-spacing:0.288px;-webkit-text-stroke:0.12px #4f4f4f">US West (Northern California)…</div>
<div class="t " style="left:351.20px;top:379.86px;font-size:9.5px;color:#4a4a4a;letter-spacing:0.55px;-webkit-text-stroke:0.25px #4a4a4a">OK</div>
<svg class="abs" style="left:470px;top:379px" width="25" height="20" viewBox="470 379 25 20"><path fill-rule="evenodd" fill="#d4d4d6" d="M481.79,387.60 L481.74,388.10 L482.68,388.55 L482.00,389.96 L481.06,389.51 L480.70,389.86 L480.28,390.14 L480.51,391.15 L478.99,391.50 L478.76,390.48 L478.26,390.41 L477.78,390.26 L477.13,391.07 L475.91,390.10 L476.56,389.29 L476.30,388.85 L476.12,388.38 L475.08,388.38 L475.08,386.82 L476.12,386.82 L476.30,386.35 L476.56,385.91 L475.91,385.10 L477.13,384.13 L477.78,384.94 L478.26,384.79 L478.76,384.72 L478.99,383.70 L480.51,384.05 L480.28,385.06 L480.70,385.34 L481.06,385.69 L482.00,385.24 L482.68,386.65 L481.74,387.10 Z M480.19,387.60 A1.287,1.287 0 1 0 477.61,387.60 A1.287,1.287 0 1 0 480.19,387.60 Z"/><path fill="#d4d4d6" d="M486.79,383.80 L491.51,383.80 L491.51,385.08 L490.57,385.08 L490.57,388.28 L492.30,389.72 L489.62,389.72 L489.46,391.80 L488.83,391.80 L488.68,389.72 L486.00,389.72 L487.73,388.28 L487.73,385.08 L486.79,385.08 Z"/></svg>
<div class="abs" style="left:346px;top:394px;width:148px;height:1px;background:#d9d9d9"></div>
<svg class="abs" style="left:0;top:0" width="966" height="420"><path d="M445.01,163.99 A21.2,21.2 0 0 1 472.46,131.85 L466.76,139.70 A15.07,15.07 0 0 0 446.80,162.20 Z" fill="#b8c41c"/><path d="M472.46,131.85 A21.2,21.2 0 0 1 477.98,160.23 L471.79,156.37 A15.07,15.07 0 0 0 466.76,139.70 Z" fill="#f5c400"/><path d="M477.98,160.23 A21.2,21.2 0 0 1 474.99,163.99 L470.39,159.39 A15.07,15.07 0 0 0 471.79,156.37 Z" fill="#e30b17"/><polygon points="440.61,161.59 445.52,161.59 445.03,164.10 440.61,167.10" fill="#fff"/><path d="M460.71,146.83 L444.28,163.66 L462.21,148.44 Z" fill="#777"/><circle cx="461.46" cy="147.64" r="1.10" fill="#777"/><rect x="597.5" y="145.5" width="26" height="11" fill="#fff" stroke="#aaa" stroke-width="1"/><rect x="600" y="148" width="10" height="6" fill="#f7f7f7"/><rect x="612" y="148" width="9" height="6" fill="#b8c41c"/><path d="M764.3,153.3 L773.3,129.4 L766.5,153.70000000000002 Z" fill="#666"/><path d="M907.01,163.99 A21.2,21.2 0 0 1 934.46,131.85 L928.76,139.70 A15.07,15.07 0 0 0 908.80,162.20 Z" fill="#b8c41c"/><path d="M934.46,131.85 A21.2,21.2 0 0 1 939.98,160.23 L933.79,156.37 A15.07,15.07 0 0 0 928.76,139.70 Z" fill="#f5c400"/><path d="M939.98,160.23 A21.2,21.2 0 0 1 936.99,163.99 L932.39,159.39 A15.07,15.07 0 0 0 933.79,156.37 Z" fill="#e30b17"/><polygon points="902.61,161.59 907.52,161.59 907.03,164.10 902.61,167.10" fill="#fff"/><path d="M922.71,146.83 L906.28,163.66 L924.21,148.44 Z" fill="#777"/><circle cx="923.46" cy="147.64" r="1.10" fill="#777"/><rect x="443.5" y="218.5" width="26" height="11" fill="#fff" stroke="#aaa" stroke-width="1"/><rect x="446" y="221" width="10" height="6" fill="#f7f7f7"/><rect x="458" y="221" width="9" height="6" fill="#b8c41c"/><path d="M610.3,226.3 L619.3,202.4 L612.5,226.70000000000002 Z" fill="#666"/><path d="M753.01,236.99 A21.2,21.2 0 0 1 780.46,204.85 L774.76,212.70 A15.07,15.07 0 0 0 754.80,235.20 Z" fill="#b8c41c"/><path d="M780.46,204.85 A21.2,21.2 0 0 1 785.98,233.23 L779.79,229.37 A15.07,15.07 0 0 0 774.76,212.70 Z" fill="#f5c400"/><path d="M785.98,233.23 A21.2,21.2 0 0 1 782.99,236.99 L778.39,232.39 A15.07,15.07 0 0 0 779.79,229.37 Z" fill="#e30b17"/><polygon points="748.61,234.59 753.52,234.59 753.03,237.10 748.61,240.10" fill="#fff"/><path d="M768.71,219.83 L752.28,236.66 L770.21,221.44 Z" fill="#777"/><circle cx="769.46" cy="220.64" r="1.10" fill="#777"/><rect x="905.5" y="218.5" width="26" height="11" fill="#fff" stroke="#aaa" stroke-width="1"/><rect x="908" y="221" width="10" height="6" fill="#f7f7f7"/><rect x="920" y="221" width="9" height="6" fill="#b8c41c"/><path d="M456.29999999999995,299.3 L465.3,275.4 L458.5,299.7 Z" fill="#666"/><path d="M599.01,309.99 A21.2,21.2 0 0 1 602.45,277.22 L606.45,283.38 A15.07,15.07 0 0 0 600.80,308.20 Z" fill="#b8c41c"/><path d="M602.45,277.22 A21.2,21.2 0 0 1 619.84,274.62 L617.25,283.66 A15.07,15.07 0 0 0 606.45,283.38 Z" fill="#f5c400"/><path d="M619.84,274.62 A21.2,21.2 0 0 1 628.99,309.99 L624.39,305.39 A15.07,15.07 0 0 0 617.25,283.66 Z" fill="#e30b17"/><polygon points="594.61,307.59 599.52,307.59 599.03,310.10 594.61,313.10" fill="#fff"/><path d="M614.71,292.83 L598.28,309.66 L616.21,294.44 Z" fill="#777"/><circle cx="615.46" cy="293.64" r="1.10" fill="#777"/><rect x="751.5" y="291.5" width="26" height="11" fill="#fff" stroke="#aaa" stroke-width="1"/><rect x="754" y="294" width="10" height="6" fill="#f7f7f7"/><rect x="766" y="294" width="9" height="6" fill="#b8c41c"/><path d="M918.3,299.3 L927.3,275.4 L920.5,299.7 Z" fill="#666"/><path d="M138.01,382.99 A21.2,21.2 0 0 1 165.46,350.85 L159.76,358.70 A15.07,15.07 0 0 0 139.80,381.20 Z" fill="#b8c41c"/><path d="M165.46,350.85 A21.2,21.2 0 0 1 170.98,379.23 L164.79,375.37 A15.07,15.07 0 0 0 159.76,358.70 Z" fill="#f5c400"/><path d="M170.98,379.23 A21.2,21.2 0 0 1 167.99,382.99 L163.39,378.39 A15.07,15.07 0 0 0 164.79,375.37 Z" fill="#e30b17"/><polygon points="133.61,380.59 138.52,380.59 138.03,383.10 133.61,386.10" fill="#fff"/><path d="M153.71,365.83 L137.28,382.66 L155.21,367.44 Z" fill="#777"/><circle cx="154.46" cy="366.64" r="1.10" fill="#777"/><rect x="290.5" y="364.5" width="26" height="11" fill="#fff" stroke="#aaa" stroke-width="1"/><rect x="293" y="367" width="10" height="6" fill="#f7f7f7"/><rect x="305" y="367" width="9" height="6" fill="#b8c41c"/><path d="M457.29999999999995,372.3 L466.3,348.4 L459.5,372.7 Z" fill="#666"/></svg>
<div class="abs" style="left:33px;top:417px;width:940px;height:430px;background:#fff;box-shadow:0 1px 3px rgba(0,0,0,0.22)"></div>
<div class="t " style="left:63.40px;top:462.70px;font-size:13px;color:#1c1c1c;letter-spacing:-0.2px;-webkit-text-stroke:0.3px #1c1c1c">Channel</div>
<svg class="abs" style="left:116px;top:468.7px" width="9" height="5" viewBox="0 0 9 5"><path d="M0 0 H8 L4 4.2Z" fill="#1c1c1c"/></svg>
<div class="t " style="right:700.00px;top:462.70px;font-size:13px;color:#1c1c1c;letter-spacing:-0.15px;-webkit-text-stroke:0.3px #1c1c1c">ID</div>
<svg class="abs" style="left:271.8px;top:462.1px" width="8" height="11" viewBox="0 0 8 11"><path d="M0 5 L4 0 L8 5 Z M0 5.7 L8 5.7 L4 10.8 Z" fill="#d6d6d6"/></svg>
<div class="t " style="right:595.00px;top:462.70px;font-size:13px;color:#1c1c1c;-webkit-text-stroke:0.3px #1c1c1c">Last</div>
<div class="t " style="right:611.00px;top:477.40px;font-size:13px;color:#1c1c1c;-webkit-text-stroke:0.3px #1c1c1c">Value</div>
<svg class="abs" style="left:361.2px;top:477.6px" width="8" height="11" viewBox="0 0 8 11"><path d="M0 5 L4 0 L8 5 Z M0 5.7 L8 5.7 L4 10.8 Z" fill="#d6d6d6"/></svg>
<div class="t " style="left:520.70px;top:462.70px;font-size:13px;color:#1c1c1c;letter-spacing:0.2px;-webkit-text-stroke:0.3px #1c1c1c">Minimum</div>
<svg class="abs" style="left:580.6px;top:462.1px" width="8" height="11" viewBox="0 0 8 11"><path d="M0 5 L4 0 L8 5 Z M0 5.7 L8 5.7 L4 10.8 Z" fill="#d6d6d6"/></svg>
<div class="t " style="left:737.80px;top:462.70px;font-size:13px;color:#1c1c1c;letter-spacing:0.02px;-webkit-text-stroke:0.3px #1c1c1c">Maximum</div>
<svg class="abs" style="left:800.6px;top:462.1px" width="8" height="11" viewBox="0 0 8 11"><path d="M0 5 L4 0 L8 5 Z M0 5.7 L8 5.7 L4 10.8 Z" fill="#d6d6d6"/></svg>
<div class="abs" style="left:53px;top:495px;width:898px;height:1px;background:#e8e8e8"></div>
<div class="t " style="left:63.30px;top:511.00px;font-size:13px;color:#555;letter-spacing:-0.015px">Asia Pacific (Singapore)</div>
<div class="t " style="right:684.30px;top:511.00px;font-size:13px;color:#555">10</div>
<div class="t " style="right:595.00px;top:511.00px;font-size:13px;color:#555">55 msec</div>
<div class="t " style="right:375.00px;top:511.00px;font-size:13px;color:#555">21 msec</div>
<div class="t " style="right:155.00px;top:511.00px;font-size:13px;color:#555">3.446 msec</div>
<div class="ic" style="left:877px;top:508px"><svg width="16" height="16" viewBox="0 0 16 16"><path fill-rule="evenodd" fill="#4a4a4a" d="M13.70,5.40 L13.68,5.82 L14.44,6.14 L13.99,7.53 L13.18,7.34 L12.96,7.69 L12.69,8.02 L13.12,8.72 L11.93,9.59 L11.39,8.96 L11.01,9.11 L10.60,9.22 L10.54,10.04 L9.06,10.04 L9.00,9.22 L8.59,9.11 L8.21,8.96 L7.67,9.59 L6.48,8.72 L6.91,8.02 L6.64,7.69 L6.42,7.34 L5.61,7.53 L5.16,6.14 L5.92,5.82 L5.90,5.40 L5.92,4.98 L5.16,4.66 L5.61,3.27 L6.42,3.46 L6.64,3.11 L6.91,2.78 L6.48,2.08 L7.67,1.21 L8.21,1.84 L8.59,1.69 L9.00,1.58 L9.06,0.76 L10.54,0.76 L10.60,1.58 L11.01,1.69 L11.39,1.84 L11.93,1.21 L13.12,2.08 L12.69,2.78 L12.96,3.11 L13.18,3.46 L13.99,3.27 L14.44,4.66 L13.68,4.98 Z M11.80,5.40 A2.0,2.0 0 1 0 7.80,5.40 A2.0,2.0 0 1 0 11.80,5.40 Z"/><path fill-rule="evenodd" fill="#4a4a4a" d="M6.65,11.40 L6.63,11.73 L7.14,11.99 L6.69,13.07 L6.15,12.89 L5.93,13.13 L5.69,13.35 L5.87,13.89 L4.79,14.34 L4.53,13.83 L4.20,13.85 L3.87,13.83 L3.61,14.34 L2.53,13.89 L2.71,13.35 L2.47,13.13 L2.25,12.89 L1.71,13.07 L1.26,11.99 L1.77,11.73 L1.75,11.40 L1.77,11.07 L1.26,10.81 L1.71,9.73 L2.25,9.91 L2.47,9.67 L2.71,9.45 L2.53,8.91 L3.61,8.46 L3.87,8.97 L4.20,8.95 L4.53,8.97 L4.79,8.46 L5.87,8.91 L5.69,9.45 L5.93,9.67 L6.15,9.91 L6.69,9.73 L7.14,10.81 L6.63,11.07 Z M5.20,11.40 A1.0,1.0 0 1 0 3.20,11.40 A1.0,1.0 0 1 0 5.20,11.40 Z"/></svg></div>
<div class="abs" style="left:53px;top:528px;width:898px;height:1px;background:#e8e8e8"></div>
<div class="t " style="left:63.30px;top:544.00px;font-size:13px;color:#555;letter-spacing:-0.196px">Asia Pacific (Singapore) - …</div>
<div class="t " style="right:684.30px;top:544.00px;font-size:13px;color:#555">12</div>
<div class="t " style="right:595.00px;top:544.00px;font-size:13px;color:#555">OK</div>
<div class="t " style="right:375.00px;top:544.00px;font-size:13px;color:#555">OK</div>
<div class="t " style="right:155.00px;top:544.00px;font-size:13px;color:#555">OK</div>
<div class="ic" style="left:877px;top:541px"><svg width="16" height="16" viewBox="0 0 16 16"><path fill-rule="evenodd" fill="#4a4a4a" d="M13.70,5.40 L13.68,5.82 L14.44,6.14 L13.99,7.53 L13.18,7.34 L12.96,7.69 L12.69,8.02 L13.12,8.72 L11.93,9.59 L11.39,8.96 L11.01,9.11 L10.60,9.22 L10.54,10.04 L9.06,10.04 L9.00,9.22 L8.59,9.11 L8.21,8.96 L7.67,9.59 L6.48,8.72 L6.91,8.02 L6.64,7.69 L6.42,7.34 L5.61,7.53 L5.16,6.14 L5.92,5.82 L5.90,5.40 L5.92,4.98 L5.16,4.66 L5.61,3.27 L6.42,3.46 L6.64,3.11 L6.91,2.78 L6.48,2.08 L7.67,1.21 L8.21,1.84 L8.59,1.69 L9.00,1.58 L9.06,0.76 L10.54,0.76 L10.60,1.58 L11.01,1.69 L11.39,1.84 L11.93,1.21 L13.12,2.08 L12.69,2.78 L12.96,3.11 L13.18,3.46 L13.99,3.27 L14.44,4.66 L13.68,4.98 Z M11.80,5.40 A2.0,2.0 0 1 0 7.80,5.40 A2.0,2.0 0 1 0 11.80,5.40 Z"/><path fill-rule="evenodd" fill="#4a4a4a" d="M6.65,11.40 L6.63,11.73 L7.14,11.99 L6.69,13.07 L6.15,12.89 L5.93,13.13 L5.69,13.35 L5.87,13.89 L4.79,14.34 L4.53,13.83 L4.20,13.85 L3.87,13.83 L3.61,14.34 L2.53,13.89 L2.71,13.35 L2.47,13.13 L2.25,12.89 L1.71,13.07 L1.26,11.99 L1.77,11.73 L1.75,11.40 L1.77,11.07 L1.26,10.81 L1.71,9.73 L2.25,9.91 L2.47,9.67 L2.71,9.45 L2.53,8.91 L3.61,8.46 L3.87,8.97 L4.20,8.95 L4.53,8.97 L4.79,8.46 L5.87,8.91 L5.69,9.45 L5.93,9.67 L6.15,9.91 L6.69,9.73 L7.14,10.81 L6.63,11.07 Z M5.20,11.40 A1.0,1.0 0 1 0 3.20,11.40 A1.0,1.0 0 1 0 5.20,11.40 Z"/></svg></div>
<div class="abs" style="left:53px;top:561px;width:898px;height:1px;background:#e8e8e8"></div>
<div class="t " style="left:63.30px;top:577.00px;font-size:13px;color:#555;letter-spacing:-0.196px">Asia Pacific (Singapore) - …</div>
<div class="t " style="right:684.30px;top:577.00px;font-size:13px;color:#555">11</div>
<div class="t " style="right:595.00px;top:577.00px;font-size:13px;color:#555">OK</div>
<div class="t " style="right:375.00px;top:577.00px;font-size:13px;color:#555">OK</div>
<div class="t " style="right:155.00px;top:577.00px;font-size:13px;color:#555">OK</div>
<div class="ic" style="left:877px;top:574px"><svg width="16" height="16" viewBox="0 0 16 16"><path fill-rule="evenodd" fill="#4a4a4a" d="M13.70,5.40 L13.68,5.82 L14.44,6.14 L13.99,7.53 L13.18,7.34 L12.96,7.69 L12.69,8.02 L13.12,8.72 L11.93,9.59 L11.39,8.96 L11.01,9.11 L10.60,9.22 L10.54,10.04 L9.06,10.04 L9.00,9.22 L8.59,9.11 L8.21,8.96 L7.67,9.59 L6.48,8.72 L6.91,8.02 L6.64,7.69 L6.42,7.34 L5.61,7.53 L5.16,6.14 L5.92,5.82 L5.90,5.40 L5.92,4.98 L5.16,4.66 L5.61,3.27 L6.42,3.46 L6.64,3.11 L6.91,2.78 L6.48,2.08 L7.67,1.21 L8.21,1.84 L8.59,1.69 L9.00,1.58 L9.06,0.76 L10.54,0.76 L10.60,1.58 L11.01,1.69 L11.39,1.84 L11.93,1.21 L13.12,2.08 L12.69,2.78 L12.96,3.11 L13.18,3.46 L13.99,3.27 L14.44,4.66 L13.68,4.98 Z M11.80,5.40 A2.0,2.0 0 1 0 7.80,5.40 A2.0,2.0 0 1 0 11.80,5.40 Z"/><path fill-rule="evenodd" fill="#4a4a4a" d="M6.65,11.40 L6.63,11.73 L7.14,11.99 L6.69,13.07 L6.15,12.89 L5.93,13.13 L5.69,13.35 L5.87,13.89 L4.79,14.34 L4.53,13.83 L4.20,13.85 L3.87,13.83 L3.61,14.34 L2.53,13.89 L2.71,13.35 L2.47,13.13 L2.25,12.89 L1.71,13.07 L1.26,11.99 L1.77,11.73 L1.75,11.40 L1.77,11.07 L1.26,10.81 L1.71,9.73 L2.25,9.91 L2.47,9.67 L2.71,9.45 L2.53,8.91 L3.61,8.46 L3.87,8.97 L4.20,8.95 L4.53,8.97 L4.79,8.46 L5.87,8.91 L5.69,9.45 L5.93,9.67 L6.15,9.91 L6.69,9.73 L7.14,10.81 L6.63,11.07 Z M5.20,11.40 A1.0,1.0 0 1 0 3.20,11.40 A1.0,1.0 0 1 0 5.20,11.40 Z"/></svg></div>
<div class="abs" style="left:53px;top:594px;width:898px;height:1px;background:#e8e8e8"></div>
<div class="t " style="left:63.30px;top:610.00px;font-size:13px;color:#555;letter-spacing:-0.066px">Asia Pacific (Sydney)</div>
<div class="t " style="right:684.30px;top:610.00px;font-size:13px;color:#555">20</div>
<div class="t " style="right:595.00px;top:610.00px;font-size:13px;color:#555">58 msec</div>
<div class="t " style="right:375.00px;top:610.00px;font-size:13px;color:#555">15 msec</div>
<div class="t " style="right:155.00px;top:610.00px;font-size:13px;color:#555">2.478 msec</div>
<div class="ic" style="left:877px;top:607px"><svg width="16" height="16" viewBox="0 0 16 16"><path fill-rule="evenodd" fill="#4a4a4a" d="M13.70,5.40 L13.68,5.82 L14.44,6.14 L13.99,7.53 L13.18,7.34 L12.96,7.69 L12.69,8.02 L13.12,8.72 L11.93,9.59 L11.39,8.96 L11.01,9.11 L10.60,9.22 L10.54,10.04 L9.06,10.04 L9.00,9.22 L8.59,9.11 L8.21,8.96 L7.67,9.59 L6.48,8.72 L6.91,8.02 L6.64,7.69 L6.42,7.34 L5.61,7.53 L5.16,6.14 L5.92,5.82 L5.90,5.40 L5.92,4.98 L5.16,4.66 L5.61,3.27 L6.42,3.46 L6.64,3.11 L6.91,2.78 L6.48,2.08 L7.67,1.21 L8.21,1.84 L8.59,1.69 L9.00,1.58 L9.06,0.76 L10.54,0.76 L10.60,1.58 L11.01,1.69 L11.39,1.84 L11.93,1.21 L13.12,2.08 L12.69,2.78 L12.96,3.11 L13.18,3.46 L13.99,3.27 L14.44,4.66 L13.68,4.98 Z M11.80,5.40 A2.0,2.0 0 1 0 7.80,5.40 A2.0,2.0 0 1 0 11.80,5.40 Z"/><path fill-rule="evenodd" fill="#4a4a4a" d="M6.65,11.40 L6.63,11.73 L7.14,11.99 L6.69,13.07 L6.15,12.89 L5.93,13.13 L5.69,13.35 L5.87,13.89 L4.79,14.34 L4.53,13.83 L4.20,13.85 L3.87,13.83 L3.61,14.34 L2.53,13.89 L2.71,13.35 L2.47,13.13 L2.25,12.89 L1.71,13.07 L1.26,11.99 L1.77,11.73 L1.75,11.40 L1.77,11.07 L1.26,10.81 L1.71,9.73 L2.25,9.91 L2.47,9.67 L2.71,9.45 L2.53,8.91 L3.61,8.46 L3.87,8.97 L4.20,8.95 L4.53,8.97 L4.79,8.46 L5.87,8.91 L5.69,9.45 L5.93,9.67 L6.15,9.91 L6.69,9.73 L7.14,10.81 L6.63,11.07 Z M5.20,11.40 A1.0,1.0 0 1 0 3.20,11.40 A1.0,1.0 0 1 0 5.20,11.40 Z"/></svg></div>
<div class="abs" style="left:53px;top:627px;width:898px;height:1px;background:#e8e8e8"></div>
<div class="t " style="left:63.30px;top:643.00px;font-size:13px;color:#555;letter-spacing:-0.325px">Asia Pacific (Sydney) - PR…</div>
<div class="t " style="right:684.30px;top:643.00px;font-size:13px;color:#555">22</div>
<div class="t " style="right:595.00px;top:643.00px;font-size:13px;color:#555">OK</div>
<div class="t " style="right:375.00px;top:643.00px;font-size:13px;color:#555">OK</div>
<div class="t " style="right:155.00px;top:643.00px;font-size:13px;color:#555">OK</div>
<div class="ic" style="left:877px;top:640px"><svg width="16" height="16" viewBox="0 0 16 16"><path fill-rule="evenodd" fill="#4a4a4a" d="M13.70,5.40 L13.68,5.82 L14.44,6.14 L13.99,7.53 L13.18,7.34 L12.96,7.69 L12.69,8.02 L13.12,8.72 L11.93,9.59 L11.39,8.96 L11.01,9.11 L10.60,9.22 L10.54,10.04 L9.06,10.04 L9.00,9.22 L8.59,9.11 L8.21,8.96 L7.67,9.59 L6.48,8.72 L6.91,8.02 L6.64,7.69 L6.42,7.34 L5.61,7.53 L5.16,6.14 L5.92,5.82 L5.90,5.40 L5.92,4.98 L5.16,4.66 L5.61,3.27 L6.42,3.46 L6.64,3.11 L6.91,2.78 L6.48,2.08 L7.67,1.21 L8.21,1.84 L8.59,1.69 L9.00,1.58 L9.06,0.76 L10.54,0.76 L10.60,1.58 L11.01,1.69 L11.39,1.84 L11.93,1.21 L13.12,2.08 L12.69,2.78 L12.96,3.11 L13.18,3.46 L13.99,3.27 L14.44,4.66 L13.68,4.98 Z M11.80,5.40 A2.0,2.0 0 1 0 7.80,5.40 A2.0,2.0 0 1 0 11.80,5.40 Z"/><path fill-rule="evenodd" fill="#4a4a4a" d="M6.65,11.40 L6.63,11.73 L7.14,11.99 L6.69,13.07 L6.15,12.89 L5.93,13.13 L5.69,13.35 L5.87,13.89 L4.79,14.34 L4.53,13.83 L4.20,13.85 L3.87,13.83 L3.61,14.34 L2.53,13.89 L2.71,13.35 L2.47,13.13 L2.25,12.89 L1.71,13.07 L1.26,11.99 L1.77,11.73 L1.75,11.40 L1.77,11.07 L1.26,10.81 L1.71,9.73 L2.25,9.91 L2.47,9.67 L2.71,9.45 L2.53,8.91 L3.61,8.46 L3.87,8.97 L4.20,8.95 L4.53,8.97 L4.79,8.46 L5.87,8.91 L5.69,9.45 L5.93,9.67 L6.15,9.91 L6.69,9.73 L7.14,10.81 L6.63,11.07 Z M5.20,11.40 A1.0,1.0 0 1 0 3.20,11.40 A1.0,1.0 0 1 0 5.20,11.40 Z"/></svg></div>
<div class="abs" style="left:53px;top:660px;width:898px;height:1px;background:#e8e8e8"></div>
<div class="t " style="left:63.30px;top:676.00px;font-size:13px;color:#555;letter-spacing:-0.269px">Asia Pacific (Sydney) - Re…</div>
<div class="t " style="right:684.30px;top:676.00px;font-size:13px;color:#555">21</div>
<div class="t " style="right:595.00px;top:676.00px;font-size:13px;color:#555">OK</div>
<div class="t " style="right:375.00px;top:676.00px;font-size:13px;color:#555">OK</div>
<div class="t " style="right:155.00px;top:676.00px;font-size:13px;color:#555">OK</div>
<div class="ic" style="left:877px;top:673px"><svg width="16" height="16" viewBox="0 0 16 16"><path fill-rule="evenodd" fill="#4a4a4a" d="M13.70,5.40 L13.68,5.82 L14.44,6.14 L13.99,7.53 L13.18,7.34 L12.96,7.69 L12.69,8.02 L13.12,8.72 L11.93,9.59 L11.39,8.96 L11.01,9.11 L10.60,9.22 L10.54,10.04 L9.06,10.04 L9.00,9.22 L8.59,9.11 L8.21,8.96 L7.67,9.59 L6.48,8.72 L6.91,8.02 L6.64,7.69 L6.42,7.34 L5.61,7.53 L5.16,6.14 L5.92,5.82 L5.90,5.40 L5.92,4.98 L5.16,4.66 L5.61,3.27 L6.42,3.46 L6.64,3.11 L6.91,2.78 L6.48,2.08 L7.67,1.21 L8.21,1.84 L8.59,1.69 L9.00,1.58 L9.06,0.76 L10.54,0.76 L10.60,1.58 L11.01,1.69 L11.39,1.84 L11.93,1.21 L13.12,2.08 L12.69,2.78 L12.96,3.11 L13.18,3.46 L13.99,3.27 L14.44,4.66 L13.68,4.98 Z M11.80,5.40 A2.0,2.0 0 1 0 7.80,5.40 A2.0,2.0 0 1 0 11.80,5.40 Z"/><path fill-rule="evenodd" fill="#4a4a4a" d="M6.65,11.40 L6.63,11.73 L7.14,11.99 L6.69,13.07 L6.15,12.89 L5.93,13.13 L5.69,13.35 L5.87,13.89 L4.79,14.34 L4.53,13.83 L4.20,13.85 L3.87,13.83 L3.61,14.34 L2.53,13.89 L2.71,13.35 L2.47,13.13 L2.25,12.89 L1.71,13.07 L1.26,11.99 L1.77,11.73 L1.75,11.40 L1.77,11.07 L1.26,10.81 L1.71,9.73 L2.25,9.91 L2.47,9.67 L2.71,9.45 L2.53,8.91 L3.61,8.46 L3.87,8.97 L4.20,8.95 L4.53,8.97 L4.79,8.46 L5.87,8.91 L5.69,9.45 L5.93,9.67 L6.15,9.91 L6.69,9.73 L7.14,10.81 L6.63,11.07 Z M5.20,11.40 A1.0,1.0 0 1 0 3.20,11.40 A1.0,1.0 0 1 0 5.20,11.40 Z"/></svg></div>
<div class="abs" style="left:53px;top:693px;width:898px;height:1px;background:#e8e8e8"></div>
<div class="t " style="left:63.30px;top:709.00px;font-size:13px;color:#555;letter-spacing:0.243px">Downtime</div>
<div class="t " style="right:684.30px;top:709.00px;font-size:13px;color:#555">-4</div>
<div class="ic" style="left:877px;top:706px"><svg width="16" height="16" viewBox="0 0 16 16"><path fill-rule="evenodd" fill="#4a4a4a" d="M13.70,5.40 L13.68,5.82 L14.44,6.14 L13.99,7.53 L13.18,7.34 L12.96,7.69 L12.69,8.02 L13.12,8.72 L11.93,9.59 L11.39,8.96 L11.01,9.11 L10.60,9.22 L10.54,10.04 L9.06,10.04 L9.00,9.22 L8.59,9.11 L8.21,8.96 L7.67,9.59 L6.48,8.72 L6.91,8.02 L6.64,7.69 L6.42,7.34 L5.61,7.53 L5.16,6.14 L5.92,5.82 L5.90,5.40 L5.92,4.98 L5.16,4.66 L5.61,3.27 L6.42,3.46 L6.64,3.11 L6.91,2.78 L6.48,2.08 L7.67,1.21 L8.21,1.84 L8.59,1.69 L9.00,1.58 L9.06,0.76 L10.54,0.76 L10.60,1.58 L11.01,1.69 L11.39,1.84 L11.93,1.21 L13.12,2.08 L12.69,2.78 L12.96,3.11 L13.18,3.46 L13.99,3.27 L14.44,4.66 L13.68,4.98 Z M11.80,5.40 A2.0,2.0 0 1 0 7.80,5.40 A2.0,2.0 0 1 0 11.80,5.40 Z"/><path fill-rule="evenodd" fill="#4a4a4a" d="M6.65,11.40 L6.63,11.73 L7.14,11.99 L6.69,13.07 L6.15,12.89 L5.93,13.13 L5.69,13.35 L5.87,13.89 L4.79,14.34 L4.53,13.83 L4.20,13.85 L3.87,13.83 L3.61,14.34 L2.53,13.89 L2.71,13.35 L2.47,13.13 L2.25,12.89 L1.71,13.07 L1.26,11.99 L1.77,11.73 L1.75,11.40 L1.77,11.07 L1.26,10.81 L1.71,9.73 L2.25,9.91 L2.47,9.67 L2.71,9.45 L2.53,8.91 L3.61,8.46 L3.87,8.97 L4.20,8.95 L4.53,8.97 L4.79,8.46 L5.87,8.91 L5.69,9.45 L5.93,9.67 L6.15,9.91 L6.69,9.73 L7.14,10.81 L6.63,11.07 Z M5.20,11.40 A1.0,1.0 0 1 0 3.20,11.40 A1.0,1.0 0 1 0 5.20,11.40 Z"/></svg></div>
<div class="abs" style="left:53px;top:726px;width:898px;height:1px;background:#e8e8e8"></div>
<div class="t " style="left:63.30px;top:742.00px;font-size:13px;color:#555;letter-spacing:-0.130px">Europe (Ireland)</div>
<div class="t " style="right:684.30px;top:742.00px;font-size:13px;color:#555">30</div>
<div class="t " style="right:595.00px;top:742.00px;font-size:13px;color:#555">39 msec</div>
<div class="t " style="right:375.00px;top:742.00px;font-size:13px;color:#555">16 msec</div>
<div class="t " style="right:155.00px;top:742.00px;font-size:13px;color:#555">1.009 msec</div>
<div class="ic" style="left:877px;top:739px"><svg width="16" height="16" viewBox="0 0 16 16"><path fill-rule="evenodd" fill="#4a4a4a" d="M13.70,5.40 L13.68,5.82 L14.44,6.14 L13.99,7.53 L13.18,7.34 L12.96,7.69 L12.69,8.02 L13.12,8.72 L11.93,9.59 L11.39,8.96 L11.01,9.11 L10.60,9.22 L10.54,10.04 L9.06,10.04 L9.00,9.22 L8.59,9.11 L8.21,8.96 L7.67,9.59 L6.48,8.72 L6.91,8.02 L6.64,7.69 L6.42,7.34 L5.61,7.53 L5.16,6.14 L5.92,5.82 L5.90,5.40 L5.92,4.98 L5.16,4.66 L5.61,3.27 L6.42,3.46 L6.64,3.11 L6.91,2.78 L6.48,2.08 L7.67,1.21 L8.21,1.84 L8.59,1.69 L9.00,1.58 L9.06,0.76 L10.54,0.76 L10.60,1.58 L11.01,1.69 L11.39,1.84 L11.93,1.21 L13.12,2.08 L12.69,2.78 L12.96,3.11 L13.18,3.46 L13.99,3.27 L14.44,4.66 L13.68,4.98 Z M11.80,5.40 A2.0,2.0 0 1 0 7.80,5.40 A2.0,2.0 0 1 0 11.80,5.40 Z"/><path fill-rule="evenodd" fill="#4a4a4a" d="M6.65,11.40 L6.63,11.73 L7.14,11.99 L6.69,13.07 L6.15,12.89 L5.93,13.13 L5.69,13.35 L5.87,13.89 L4.79,14.34 L4.53,13.83 L4.20,13.85 L3.87,13.83 L3.61,14.34 L2.53,13.89 L2.71,13.35 L2.47,13.13 L2.25,12.89 L1.71,13.07 L1.26,11.99 L1.77,11.73 L1.75,11.40 L1.77,11.07 L1.26,10.81 L1.71,9.73 L2.25,9.91 L2.47,9.67 L2.71,9.45 L2.53,8.91 L3.61,8.46 L3.87,8.97 L4.20,8.95 L4.53,8.97 L4.79,8.46 L5.87,8.91 L5.69,9.45 L5.93,9.67 L6.15,9.91 L6.69,9.73 L7.14,10.81 L6.63,11.07 Z M5.20,11.40 A1.0,1.0 0 1 0 3.20,11.40 A1.0,1.0 0 1 0 5.20,11.40 Z"/></svg></div>
<div class="abs" style="left:53px;top:759px;width:898px;height:1px;background:#e8e8e8"></div>
<div class="t " style="left:63.30px;top:775.00px;font-size:13px;color:#555;letter-spacing:-0.472px">Europe (Ireland) - PRTG Cl…</div>
<div class="t " style="right:684.30px;top:775.00px;font-size:13px;color:#555">32</div>
<div class="t " style="right:595.00px;top:775.00px;font-size:13px;color:#555">OK</div>
<div class="t " style="right:375.00px;top:775.00px;font-size:13px;color:#555">OK</div>
<div class="t " style="right:155.00px;top:775.00px;font-size:13px;color:#555">OK</div>
<div class="ic" style="left:877px;top:772px"><svg width="16" height="16" viewBox="0 0 16 16"><path fill-rule="evenodd" fill="#4a4a4a" d="M13.70,5.40 L13.68,5.82 L14.44,6.14 L13.99,7.53 L13.18,7.34 L12.96,7.69 L12.69,8.02 L13.12,8.72 L11.93,9.59 L11.39,8.96 L11.01,9.11 L10.60,9.22 L10.54,10.04 L9.06,10.04 L9.00,9.22 L8.59,9.11 L8.21,8.96 L7.67,9.59 L6.48,8.72 L6.91,8.02 L6.64,7.69 L6.42,7.34 L5.61,7.53 L5.16,6.14 L5.92,5.82 L5.90,5.40 L5.92,4.98 L5.16,4.66 L5.61,3.27 L6.42,3.46 L6.64,3.11 L6.91,2.78 L6.48,2.08 L7.67,1.21 L8.21,1.84 L8.59,1.69 L9.00,1.58 L9.06,0.76 L10.54,0.76 L10.60,1.58 L11.01,1.69 L11.39,1.84 L11.93,1.21 L13.12,2.08 L12.69,2.78 L12.96,3.11 L13.18,3.46 L13.99,3.27 L14.44,4.66 L13.68,4.98 Z M11.80,5.40 A2.0,2.0 0 1 0 7.80,5.40 A2.0,2.0 0 1 0 11.80,5.40 Z"/><path fill-rule="evenodd" fill="#4a4a4a" d="M6.65,11.40 L6.63,11.73 L7.14,11.99 L6.69,13.07 L6.15,12.89 L5.93,13.13 L5.69,13.35 L5.87,13.89 L4.79,14.34 L4.53,13.83 L4.20,13.85 L3.87,13.83 L3.61,14.34 L2.53,13.89 L2.71,13.35 L2.47,13.13 L2.25,12.89 L1.71,13.07 L1.26,11.99 L1.77,11.73 L1.75,11.40 L1.77,11.07 L1.26,10.81 L1.71,9.73 L2.25,9.91 L2.47,9.67 L2.71,9.45 L2.53,8.91 L3.61,8.46 L3.87,8.97 L4.20,8.95 L4.53,8.97 L4.79,8.46 L5.87,8.91 L5.69,9.45 L5.93,9.67 L6.15,9.91 L6.69,9.73 L7.14,10.81 L6.63,11.07 Z M5.20,11.40 A1.0,1.0 0 1 0 3.20,11.40 A1.0,1.0 0 1 0 5.20,11.40 Z"/></svg></div>
<div class="abs" style="left:53px;top:792px;width:898px;height:1px;background:#e8e8e8"></div>
<div class="t " style="left:63.30px;top:808.00px;font-size:13px;color:#555;letter-spacing:-0.356px">Europe (Ireland) - Respon…</div>
<div class="t " style="right:684.30px;top:808.00px;font-size:13px;color:#555">31</div>
<div class="t " style="right:595.00px;top:808.00px;font-size:13px;color:#555">OK</div>
<div class="t " style="right:375.00px;top:808.00px;font-size:13px;color:#555">OK</div>
<div class="t " style="right:155.00px;top:808.00px;font-size:13px;color:#555">OK</div>
<div class="ic" style="left:877px;top:805px"><svg width="16" height="16" viewBox="0 0 16 16"><path fill-rule="evenodd" fill="#4a4a4a" d="M13.70,5.40 L13.68,5.82 L14.44,6.14 L13.99,7.53 L13.18,7.34 L12.96,7.69 L12.69,8.02 L13.12,8.72 L11.93,9.59 L11.39,8.96 L11.01,9.11 L10.60,9.22 L10.54,10.04 L9.06,10.04 L9.00,9.22 L8.59,9.11 L8.21,8.96 L7.67,9.59 L6.48,8.72 L6.91,8.02 L6.64,7.69 L6.42,7.34 L5.61,7.53 L5.16,6.14 L5.92,5.82 L5.90,5.40 L5.92,4.98 L5.16,4.66 L5.61,3.27 L6.42,3.46 L6.64,3.11 L6.91,2.78 L6.48,2.08 L7.67,1.21 L8.21,1.84 L8.59,1.69 L9.00,1.58 L9.06,0.76 L10.54,0.76 L10.60,1.58 L11.01,1.69 L11.39,1.84 L11.93,1.21 L13.12,2.08 L12.69,2.78 L12.96,3.11 L13.18,3.46 L13.99,3.27 L14.44,4.66 L13.68,4.98 Z M11.80,5.40 A2.0,2.0 0 1 0 7.80,5.40 A2.0,2.0 0 1 0 11.80,5.40 Z"/><path fill-rule="evenodd" fill="#4a4a4a" d="M6.65,11.40 L6.63,11.73 L7.14,11.99 L6.69,13.07 L6.15,12.89 L5.93,13.13 L5.69,13.35 L5.87,13.89 L4.79,14.34 L4.53,13.83 L4.20,13.85 L3.87,13.83 L3.61,14.34 L2.53,13.89 L2.71,13.35 L2.47,13.13 L2.25,12.89 L1.71,13.07 L1.26,11.99 L1.77,11.73 L1.75,11.40 L1.77,11.07 L1.26,10.81 L1.71,9.73 L2.25,9.91 L2.47,9.67 L2.71,9.45 L2.53,8.91 L3.61,8.46 L3.87,8.97 L4.20,8.95 L4.53,8.97 L4.79,8.46 L5.87,8.91 L5.69,9.45 L5.93,9.67 L6.15,9.91 L6.69,9.73 L7.14,10.81 L6.63,11.07 Z M5.20,11.40 A1.0,1.0 0 1 0 3.20,11.40 A1.0,1.0 0 1 0 5.20,11.40 Z"/></svg></div>
<div class="abs" style="left:53px;top:825px;width:898px;height:1px;background:#e8e8e8"></div>
<div class="abs" style="left:0;top:0;width:966px;height:1px;background:rgba(100,100,100,0.3)"></div>
<div class="abs" style="left:0;top:0;width:1px;height:834px;background:rgba(90,90,90,0.35)"></div>
<div class="abs" style="left:964px;top:0;width:2px;height:834px;background:#cfcfcf"></div>
<div class="abs" style="left:0;top:832px;width:966px;height:2px;background:#cfcfcf"></div>
</body></html>
